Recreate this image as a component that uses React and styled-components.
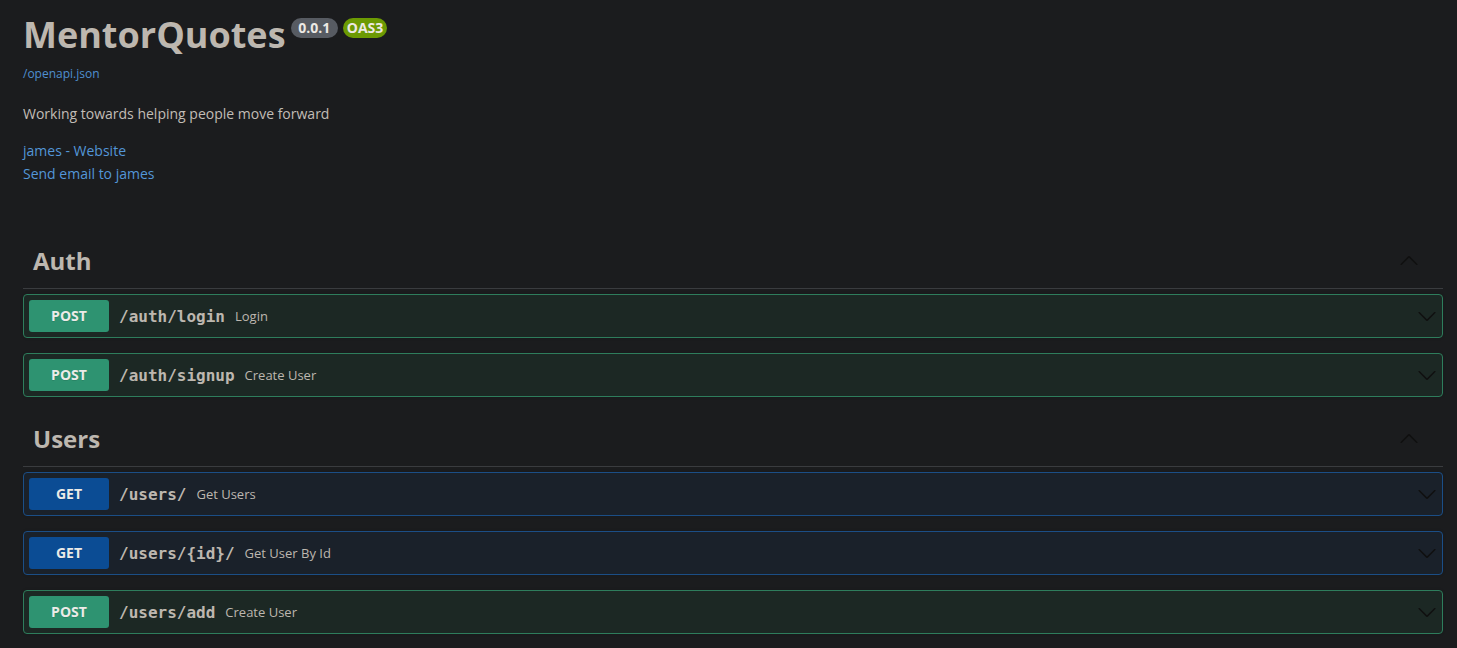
import React from "react";
import styled, { createGlobalStyle } from "styled-components";

const GlobalStyle = createGlobalStyle`
  html, body {
    margin: 0;
    padding: 0;
    background: #1b1c1e;
  }
  body {
    font-family: "Open Sans", "Noto Sans", sans-serif;
    color: #bdb7af;
  }
  * { box-sizing: border-box; }
`;

const Page = styled.div`
  padding: 10px 14px 20px 23px;
`;

const Info = styled.section`
  margin-bottom: 49px;
`;

const TitleRow = styled.div`
  display: flex;
  align-items: flex-start;
`;

const Title = styled.h2`
  margin: 0;
  font-size: 36px;
  line-height: 49px;
  font-weight: 700;
  color: #bdb7af;
`;

const Badge = styled.small`
  display: inline-block;
  margin: 8px 0 0 5px;
  padding: 2px 4px;
  border-radius: 57px;
  background: ${(p) => p.$bg};
  color: #ece9e4;
  font-size: 14px;
  line-height: 16px;
  font-weight: 700;
  white-space: pre;
`;

const BaseUrl = styled.a`
  display: block;
  margin-top: 7px;
  font-size: 12px;
  line-height: 16px;
  color: #4f8fd0;
  text-decoration: none;
`;

const Description = styled.p`
  margin: 22px 0 0;
  font-size: 14px;
  line-height: 19px;
  color: #c2bdb6;
`;

const Contacts = styled.div`
  margin-top: 16px;
  display: flex;
  flex-direction: column;
  align-items: flex-start;
`;

const ContactLink = styled.a`
  font-size: 14px;
  line-height: 23px;
  color: #5396d8;
  text-decoration: none;
`;

const TagSection = styled.section`
  display: flex;
  flex-direction: column;
`;

const TagHeader = styled.h3`
  display: flex;
  align-items: center;
  margin: 0 0 5px;
  padding: 10px 24px 10px 10px;
  border-bottom: 1px solid #3a3c3f;
`;

const TagName = styled.span`
  flex: 1;
  font-size: 24px;
  line-height: 34px;
  font-weight: 700;
  color: #bdb7af;
`;

const OpBlock = styled.div`
  display: flex;
  align-items: center;
  padding: 5px;
  margin-bottom: 15px;
  border: 1px solid ${(p) => (p.$method === "GET" ? "#1b4e86" : "#2e7d5c")};
  border-radius: 4px;
  background: ${(p) => (p.$method === "GET" ? "#1a212a" : "#1c2824")};
  box-shadow: 0 0 3px rgba(0, 0, 0, 0.19);
`;

const Method = styled.span`
  min-width: 80px;
  padding: 6px 0;
  border-radius: 3px;
  background: ${(p) => (p.$method === "GET" ? "#0b4c94" : "#2e9371")};
  color: #ecebe8;
  font-size: 14px;
  line-height: 20px;
  font-weight: 700;
  text-align: center;
  text-shadow: 0 1px 0 rgba(0, 0, 0, 0.1);
`;

const Path = styled.span`
  padding: 0 10px;
  font-family: "DejaVu Sans Mono", "Liberation Mono", monospace;
  font-size: 16px;
  font-weight: 700;
  color: #bdb7af;
`;

const Summary = styled.span`
  flex: 1;
  font-size: 13px;
  color: #bdb7af;
`;

const Arrow = styled.svg`
  width: 20px;
  height: 20px;
  flex: none;
  fill: #101010;
  transform: ${(p) => (p.$up ? "rotate(180deg)" : "none")};
`;

const Chevron = ({ up }) => (
  <Arrow $up={up} viewBox="0 0 20 20" aria-hidden="true">
    <path d="M17.418 6.109c.272-.268.709-.268.979 0s.271.701 0 .969l-7.908 7.83c-.27.268-.707.268-.979 0l-7.908-7.83c-.27-.268-.27-.701 0-.969.271-.268.709-.268.979 0L10 13.25l7.418-7.141z" />
  </Arrow>
);

const tags = [
  {
    name: "Auth",
    ops: [
      { method: "POST", path: "/auth/login", summary: "Login" },
      { method: "POST", path: "/auth/signup", summary: "Create User" },
    ],
  },
  {
    name: "Users",
    ops: [
      { method: "GET", path: "/users/", summary: "Get Users" },
      { method: "GET", path: "/users/{id}/", summary: "Get User By Id" },
      { method: "POST", path: "/users/add", summary: "Create User" },
    ],
  },
];

export default function App() {
  return (
    <>
      <GlobalStyle />
      <Page>
        <Info>
          <TitleRow>
            <Title>MentorQuotes</Title>
            <Badge $bg="#575b62">{" 0.0.1 "}</Badge>
            <Badge $bg="#6c9a03">OAS3</Badge>
          </TitleRow>
          <BaseUrl href="#">/openapi.json</BaseUrl>
          <Description>Working towards helping people move forward</Description>
          <Contacts>
            <ContactLink href="#">james - Website</ContactLink>
            <ContactLink href="#">Send email to james</ContactLink>
          </Contacts>
        </Info>
        {tags.map((tag) => (
          <TagSection key={tag.name}>
            <TagHeader>
              <TagName>{tag.name}</TagName>
              <Chevron up />
            </TagHeader>
            {tag.ops.map((op) => (
              <OpBlock key={op.path} $method={op.method}>
                <Method $method={op.method}>{op.method}</Method>
                <Path>{op.path}</Path>
                <Summary>{op.summary}</Summary>
                <Chevron />
              </OpBlock>
            ))}
          </TagSection>
        ))}
      </Page>
    </>
  );
}
